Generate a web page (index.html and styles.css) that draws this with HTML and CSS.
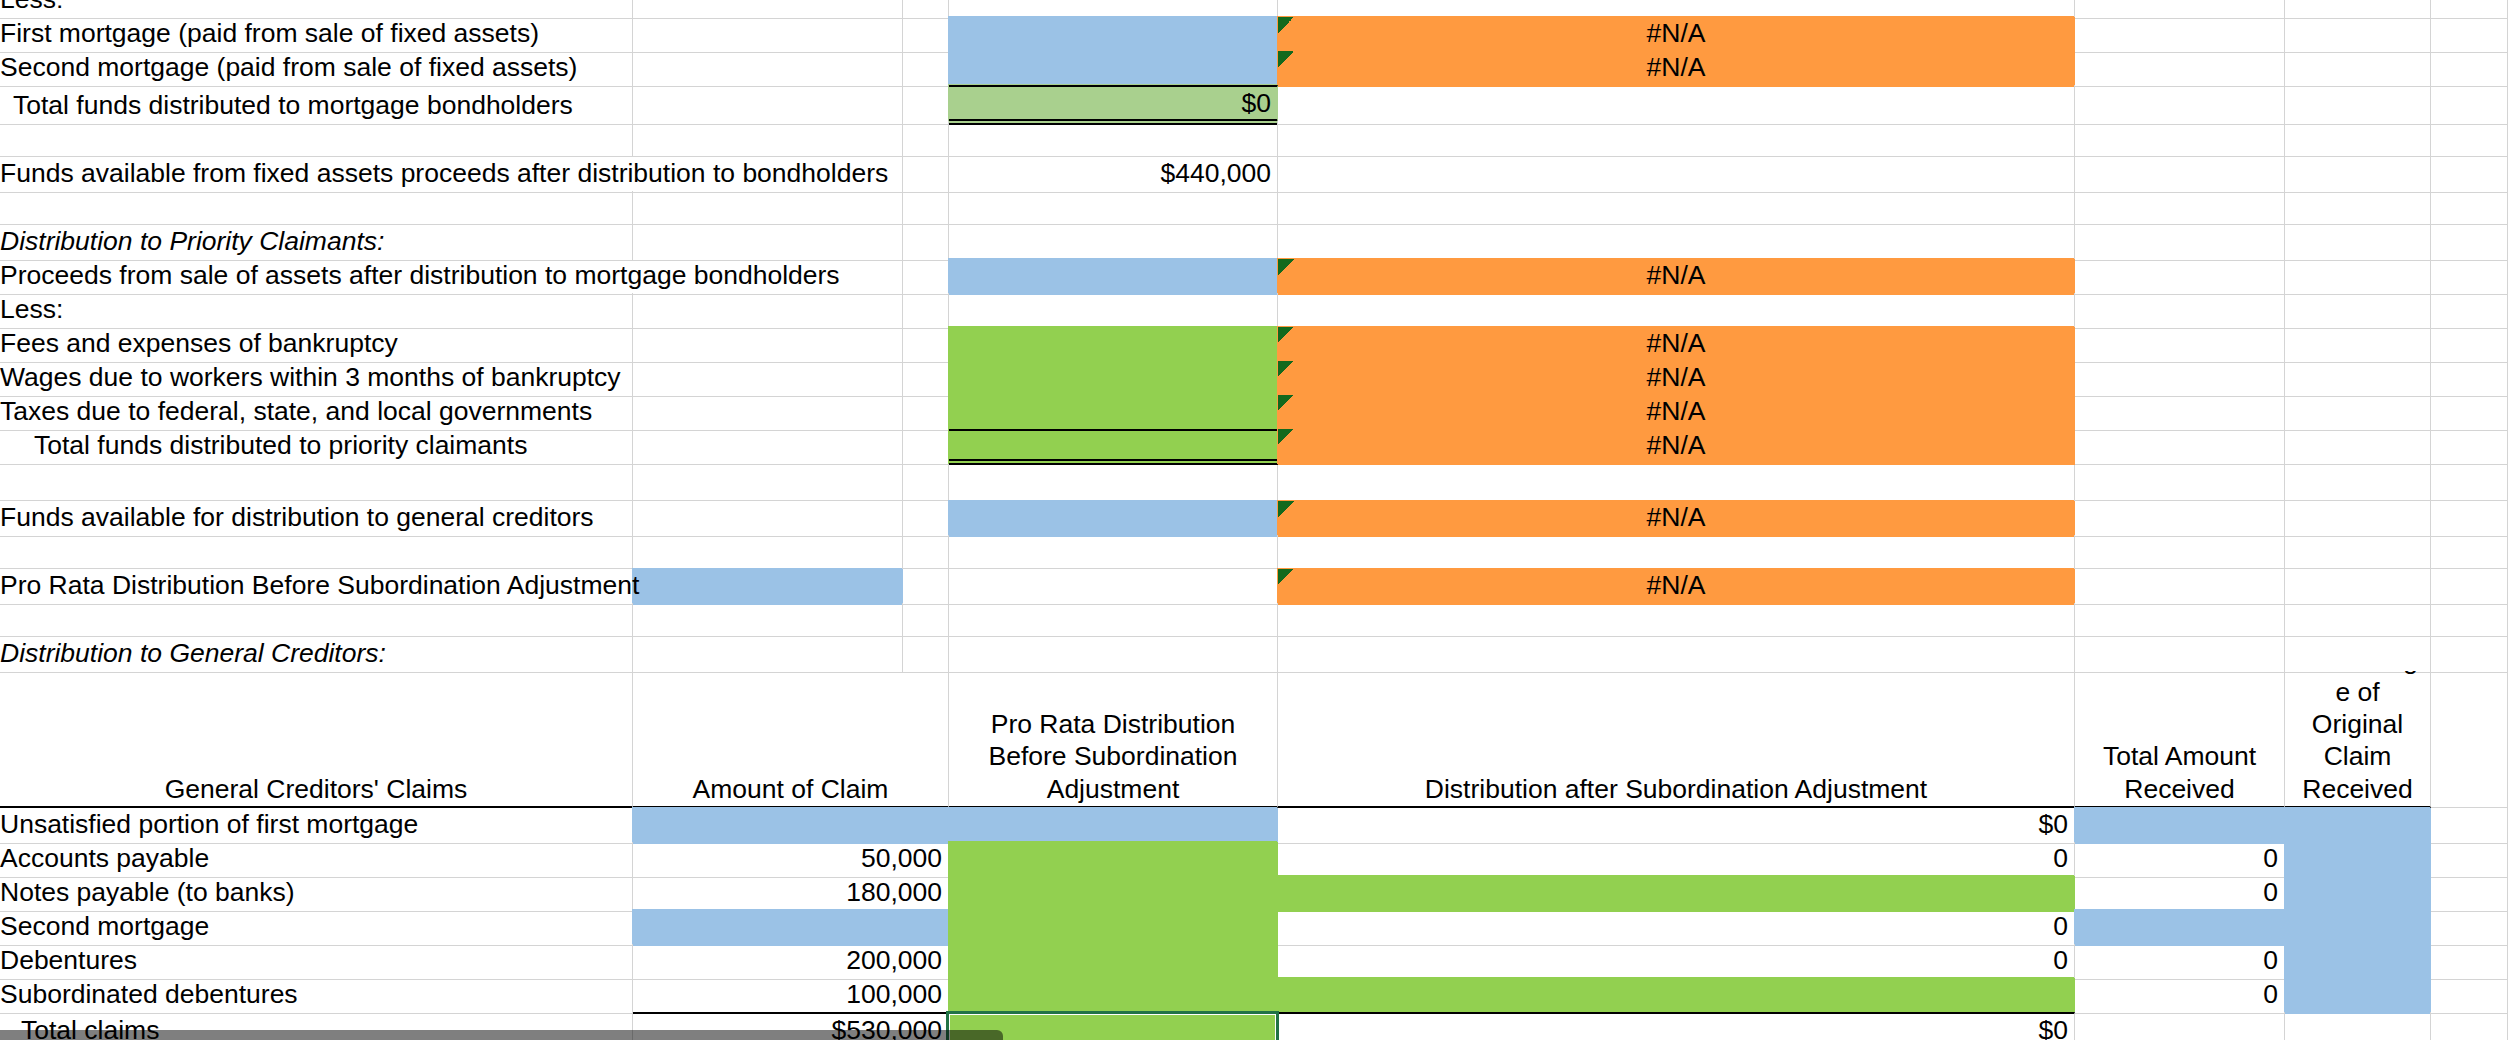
FILE: index.html
```html
<!DOCTYPE html>
<html lang="en">
<head>
<meta charset="utf-8">
<title>Bankruptcy distribution worksheet</title>
<link rel="stylesheet" href="styles.css">
</head>
<body>
<div class="sheet">
  <div class="row">
    <div class="c a">Less:</div><div class="c"></div><div class="c"></div><div class="c"></div><div class="c"></div><div class="c"></div><div class="c"></div><div class="c"></div>
  </div>
  <div class="row">
    <div class="c a">First mortgage (paid from sale of fixed assets)</div><div class="c"></div><div class="c"></div><div class="c bl"></div><div class="c m or er">#N/A</div><div class="c"></div><div class="c"></div><div class="c"></div>
  </div>
  <div class="row">
    <div class="c a">Second mortgage (paid from sale of fixed assets)</div><div class="c"></div><div class="c"></div><div class="c bl"></div><div class="c m or er">#N/A</div><div class="c"></div><div class="c"></div><div class="c"></div>
  </div>
  <div class="row h36">
    <div class="c a in1">Total funds distributed to mortgage bondholders</div><div class="c"></div><div class="c"></div><div class="c r lg tt db">$0</div><div class="c"></div><div class="c"></div><div class="c"></div><div class="c"></div>
  </div>
  <div class="row h36">
    <div class="c a"></div><div class="c"></div><div class="c"></div><div class="c"></div><div class="c"></div><div class="c"></div><div class="c"></div><div class="c"></div>
  </div>
  <div class="row">
    <div class="c a ov">Funds available from fixed assets proceeds after distribution to bondholders</div><div class="c"></div><div class="c"></div><div class="c r">$440,000</div><div class="c"></div><div class="c"></div><div class="c"></div><div class="c"></div>
  </div>
  <div class="row">
    <div class="c a"></div><div class="c"></div><div class="c"></div><div class="c"></div><div class="c"></div><div class="c"></div><div class="c"></div><div class="c"></div>
  </div>
  <div class="row">
    <div class="c a i">Distribution to Priority Claimants:</div><div class="c"></div><div class="c"></div><div class="c"></div><div class="c"></div><div class="c"></div><div class="c"></div><div class="c"></div>
  </div>
  <div class="row">
    <div class="c a ov">Proceeds from sale of assets after distribution to mortgage bondholders</div><div class="c"></div><div class="c"></div><div class="c bl"></div><div class="c m or er">#N/A</div><div class="c"></div><div class="c"></div><div class="c"></div>
  </div>
  <div class="row">
    <div class="c a">Less:</div><div class="c"></div><div class="c"></div><div class="c"></div><div class="c"></div><div class="c"></div><div class="c"></div><div class="c"></div>
  </div>
  <div class="row">
    <div class="c a">Fees and expenses of bankruptcy</div><div class="c"></div><div class="c"></div><div class="c gr"></div><div class="c m or er">#N/A</div><div class="c"></div><div class="c"></div><div class="c"></div>
  </div>
  <div class="row">
    <div class="c a">Wages due to workers within 3 months of bankruptcy</div><div class="c"></div><div class="c"></div><div class="c gr"></div><div class="c m or er">#N/A</div><div class="c"></div><div class="c"></div><div class="c"></div>
  </div>
  <div class="row">
    <div class="c a">Taxes due to federal, state, and local governments</div><div class="c"></div><div class="c"></div><div class="c gr"></div><div class="c m or er">#N/A</div><div class="c"></div><div class="c"></div><div class="c"></div>
  </div>
  <div class="row h36">
    <div class="c a in2">Total funds distributed to priority claimants</div><div class="c"></div><div class="c"></div><div class="c gr tt db"></div><div class="c m or er">#N/A</div><div class="c"></div><div class="c"></div><div class="c"></div>
  </div>
  <div class="row h36">
    <div class="c a"></div><div class="c"></div><div class="c"></div><div class="c"></div><div class="c"></div><div class="c"></div><div class="c"></div><div class="c"></div>
  </div>
  <div class="row">
    <div class="c a">Funds available for distribution to general creditors</div><div class="c"></div><div class="c"></div><div class="c bl"></div><div class="c m or er">#N/A</div><div class="c"></div><div class="c"></div><div class="c"></div>
  </div>
  <div class="row">
    <div class="c a"></div><div class="c"></div><div class="c"></div><div class="c"></div><div class="c"></div><div class="c"></div><div class="c"></div><div class="c"></div>
  </div>
  <div class="row">
    <div class="c a ov">Pro Rata Distribution Before Subordination Adjustment</div><div class="c bl"></div><div class="c"></div><div class="c"></div><div class="c m or er">#N/A</div><div class="c"></div><div class="c"></div><div class="c"></div>
  </div>
  <div class="row">
    <div class="c a"></div><div class="c"></div><div class="c"></div><div class="c"></div><div class="c"></div><div class="c"></div><div class="c"></div><div class="c"></div>
  </div>
  <div class="row">
    <div class="c a i">Distribution to General Creditors:</div><div class="c"></div><div class="c"></div><div class="c"></div><div class="c"></div><div class="c"></div><div class="c"></div><div class="c"></div>
  </div>
  <div class="row hdr">
    <div class="c m hb">General Creditors' Claims</div>
    <div class="c m hb s2">Amount of Claim</div>
    <div class="c m hb w">Pro Rata Distribution Before Subordination Adjustment</div>
    <div class="c m hb">Distribution after Subordination Adjustment</div>
    <div class="c m hb w">Total Amount Received</div>
    <div class="c m hb w clip">Percentage of Original Claim Received</div>
    <div class="c"></div>
  </div>
  <div class="row">
    <div class="c a">Unsatisfied portion of first mortgage</div><div class="c s2 bl"></div><div class="c bl"></div><div class="c r">$0</div><div class="c bl"></div><div class="c bl"></div><div class="c"></div>
  </div>
  <div class="row">
    <div class="c a">Accounts payable</div><div class="c s2 r">50,000</div><div class="c gr"></div><div class="c r">0</div><div class="c r">0</div><div class="c bl"></div><div class="c"></div>
  </div>
  <div class="row">
    <div class="c a">Notes payable (to banks)</div><div class="c s2 r">180,000</div><div class="c gr"></div><div class="c gr"></div><div class="c r">0</div><div class="c bl"></div><div class="c"></div>
  </div>
  <div class="row">
    <div class="c a">Second mortgage</div><div class="c s2 bl"></div><div class="c gr"></div><div class="c r">0</div><div class="c bl"></div><div class="c bl"></div><div class="c"></div>
  </div>
  <div class="row">
    <div class="c a">Debentures</div><div class="c s2 r">200,000</div><div class="c gr"></div><div class="c r">0</div><div class="c r">0</div><div class="c bl"></div><div class="c"></div>
  </div>
  <div class="row">
    <div class="c a">Subordinated debentures</div><div class="c s2 r">100,000</div><div class="c gr"></div><div class="c gr"></div><div class="c r">0</div><div class="c bl"></div><div class="c"></div>
  </div>
  <div class="row">
    <div class="c a in3">Total claims</div><div class="c s2 r tt">$530,000</div><div class="c gr tt sel"></div><div class="c r tt">$0</div><div class="c"></div><div class="c"></div><div class="c"></div>
  </div>
</div>
<div class="hscroll"></div>
</body>
</html>
```

FILE: styles.css
```css
* {
  box-sizing: border-box;
}

html,
body {
  margin: 0;
  padding: 0;
}

body {
  width: 2508px;
  height: 1040px;
  overflow: hidden;
  background: #ffffff;
  color: #000000;
  font-family: "Liberation Sans", Arial, sans-serif;
  font-size: 26.5px;
}

.sheet {
  margin-top: -17px;
}

.row {
  display: grid;
  grid-template-columns: 633px 270px 46px 329px 797px 210px 146px 77px;
  height: 34px;
}

.row.h36 {
  height: 36px;
}

.row.hdr {
  height: 137px;
}

.c {
  display: flex;
  align-items: flex-end;
  justify-content: flex-start;
  min-width: 0;
  padding: 0 6px 3px 6px;
  border-right: 1px solid #d4d4d4;
  border-bottom: 1px solid #d4d4d4;
  white-space: nowrap;
  line-height: 32.3px;
}

.a {
  padding-left: 0;
}

.in1 {
  padding-left: 13px;
}

.in2 {
  padding-left: 34px;
}

.in3 {
  padding-left: 21px;
}

.i {
  font-style: italic;
}

.r {
  justify-content: flex-end;
}

.m {
  justify-content: center;
  text-align: center;
}

.s2 {
  grid-column: span 2;
}

.ov {
  z-index: 1;
  border-right-color: transparent;
}

.w {
  white-space: normal;
}

.clip {
  overflow: hidden;
  overflow-wrap: anywhere;
}

/* fills (cover the gridlines like a spreadsheet fill) */
.bl {
  background: #9bc2e6;
  border-color: #9bc2e6;
  box-shadow: -1px -1px 0 #9bc2e6;
}

.gr {
  background: #92d050;
  border-color: #92d050;
  box-shadow: -1px -1px 0 #92d050;
}

.lg {
  background: #a9d08e;
  border-color: #a9d08e;
  box-shadow: -1px -1px 0 #a9d08e;
}

.or {
  background: #ff9a40;
  border-color: #ff9a40;
  box-shadow: -1px -1px 0 #ff9a40;
}

/* green error indicator in the top-left corner */
.er {
  background-image: linear-gradient(to bottom right, #13691d 50%, transparent 50%);
  background-size: 16px 16px;
  background-repeat: no-repeat;
  background-position: 0 0;
}

/* explicit cell borders */
.tt {
  border-top: 2px solid #000000;
}

.db {
  border-bottom: 6px double #000000;
  padding-bottom: 0;
}

.hb {
  border-bottom: 2px solid #000000;
  padding-bottom: 1px;
}

/* active cell selection */
.sel {
  position: relative;
}

.sel::after {
  content: "";
  position: absolute;
  left: -3px;
  top: -3px;
  right: -2px;
  bottom: -3px;
  border: 3px solid #217346;
  box-shadow: inset 0 0 0 1px #ffffff;
}

/* overlay horizontal scrollbar thumb */
.hscroll {
  position: fixed;
  left: 0;
  bottom: 0;
  width: 1003px;
  height: 10px;
  background: rgba(0, 0, 0, 0.5);
  border-top-right-radius: 6px;
  z-index: 10;
}
```
